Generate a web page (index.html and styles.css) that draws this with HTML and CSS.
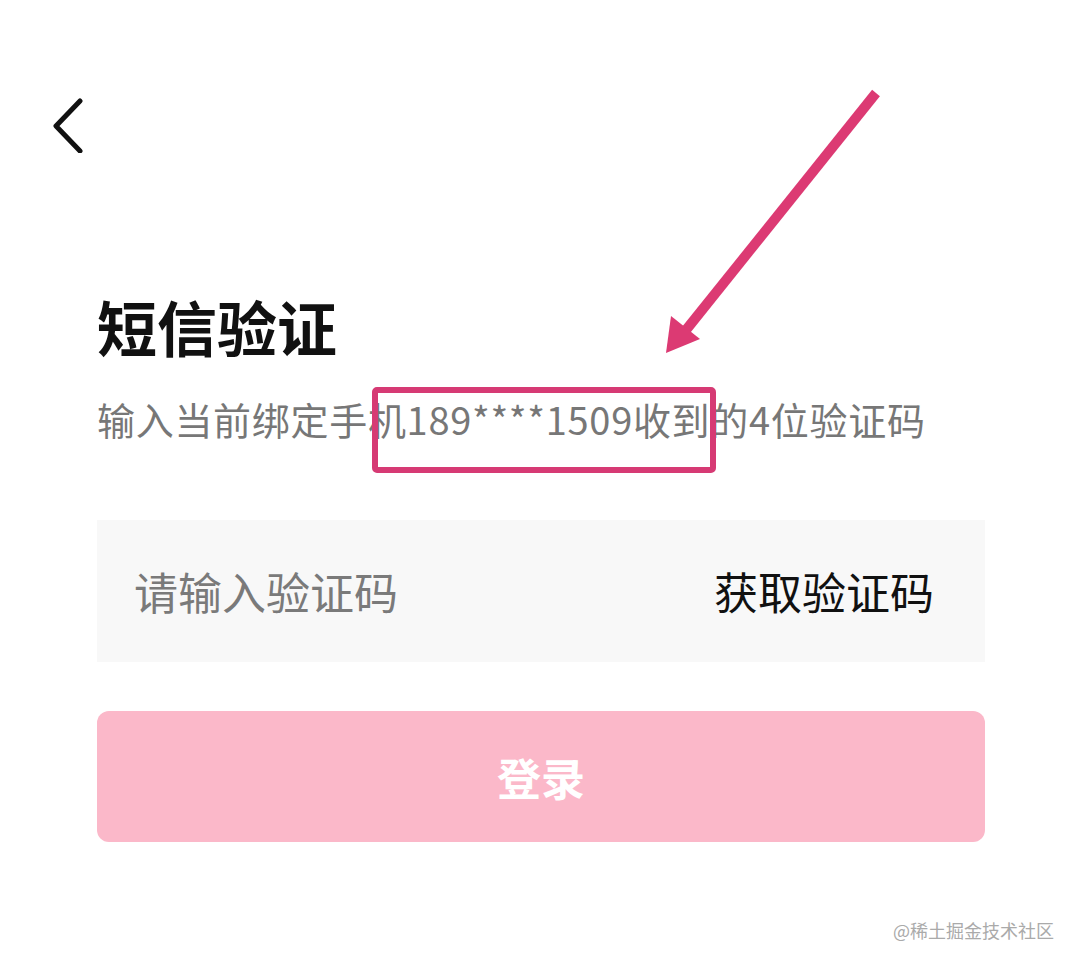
FILE: index.html
```html
<!DOCTYPE html>
<html lang="zh-CN">
<head>
    <meta charset="UTF-8">
    <meta name="viewport" content="width=device-width, initial-scale=1.0">
    <title>短信验证</title>
    <link rel="stylesheet" href="styles.css">
</head>
<body>
    <div class="page">
        <div class="top-bar">
            <a class="back" href="#">
                <svg width="40" height="60" viewBox="0 0 40 60">
                    <polyline points="31,8 7,33 31,58" fill="none" stroke="#111" stroke-width="5" stroke-linecap="round" stroke-linejoin="round"/>
                </svg>
            </a>
        </div>
        <div class="content">
            <h1 class="title">短信验证</h1>
            <p class="subtitle">输入当前绑定手机189****1509收到的4位验证码</p>
            <div class="code-row">
                <input class="code-input" type="text" placeholder="请输入验证码">
                <button class="get-code">获取验证码</button>
            </div>
            <button class="login-btn">登录</button>
        </div>
        <div class="watermark">@稀土掘金技术社区</div>

        <!-- annotation overlays -->
        <div class="mark-box"></div>
        <svg class="mark-arrow" width="1080" height="967" viewBox="0 0 1080 967">
            <line x1="876" y1="93" x2="686" y2="330" stroke="#dc3a73" stroke-width="10" stroke-linecap="butt"/>
            <polygon points="666,353 671,316 700,339" fill="#dc3a73"/>
        </svg>
    </div>
</body>
</html>
```

FILE: styles.css
```css
body {
    margin: 0;
    padding: 0;
    background-color: #fff;
    font-family: "Noto Sans CJK SC", "Noto Sans", sans-serif;
    color: #111;
}
.page {
    position: relative;
    width: 1080px;
    height: 967px;
    overflow: hidden;
}
.top-bar {
    padding: 93px 0 0 49px;
    height: 70px;
}
.back {
    display: block;
    width: 40px;
    height: 60px;
}
.content {
    padding: 0 95px 0 97px;
}
.title {
    margin: 128px 0 0;
    font-size: 60px;
    line-height: 70px;
    font-weight: 700;
    color: #111;
}
.subtitle {
    margin: 33px 0 0;
    font-size: 38px;
    line-height: 50px;
    letter-spacing: 0.7px;
    white-space: nowrap;
    color: #777;
}
.code-row {
    display: flex;
    align-items: center;
    justify-content: space-between;
    margin-top: 76px;
    height: 142px;
    padding: 0 51px 0 37px;
    background-color: #f8f8f8;
}
.code-input {
    flex: 1;
    border: none;
    outline: none;
    background: transparent;
    font-family: inherit;
    font-size: 44px;
    color: #111;
    padding: 0;
}
.code-input::placeholder {
    color: #7a7a7a;
}
.get-code {
    border: none;
    background: transparent;
    font-family: inherit;
    font-size: 44px;
    color: #111;
    padding: 0;
}
.login-btn {
    display: block;
    width: 100%;
    height: 131px;
    margin-top: 49px;
    border: none;
    border-radius: 12px;
    background-color: #fbb8c9;
    color: #fff;
    font-family: inherit;
    font-size: 44px;
    font-weight: 700;
}
.watermark {
    position: absolute;
    right: 26px;
    bottom: 24px;
    font-size: 18px;
    color: #aaa;
}
.mark-box {
    position: absolute;
    left: 372px;
    top: 387px;
    width: 332px;
    height: 74px;
    border: 6px solid #d63a74;
    border-radius: 5px;
}
.mark-arrow {
    position: absolute;
    left: 0;
    top: 0;
    pointer-events: none;
}
```
